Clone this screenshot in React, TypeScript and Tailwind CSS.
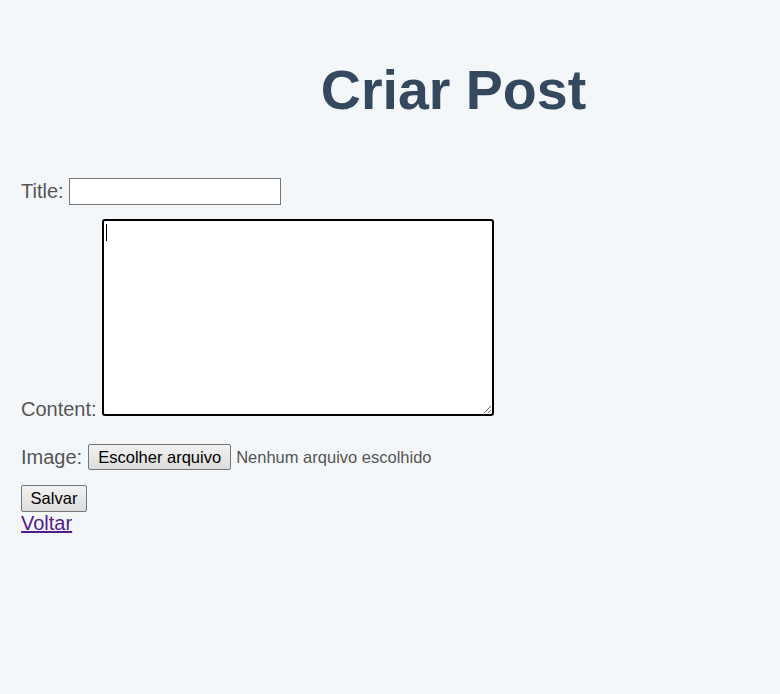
import React from "react";

export default function App() {
  return (
    <div className="min-h-[694px] bg-[#f4f7fa] font-['Liberation_Sans',Arial,sans-serif] text-[20px] leading-[23px] text-[#555]">
      <div className="pl-[127px] pt-[58px] flex justify-center">
        <h1 className="text-[55.5px] leading-[64px] font-bold text-[#34495e]">Criar Post</h1>
      </div>
      <form className="pl-[21px] pt-[56px]" onSubmit={(e) => e.preventDefault()}>
        <div className="flex items-baseline">
          <label className="mr-[5px]">Title:</label>
          <input
            type="text"
            className="w-[212px] h-[27px] bg-white border border-[#767676] px-[2px] text-[20px] outline-none"
          />
        </div>
        <div className="mt-[14px]">
          <label className="mr-[5px]">Content:</label>
          <span className="relative inline-block align-baseline">
            <textarea className="block w-[392px] h-[197px] bg-white border-2 border-black rounded-[3px] outline-none resize" />
            <span className="absolute left-[4px] top-[5px] w-[1px] h-[17px] bg-black" />
          </span>
        </div>
        <div className="mt-[23px] flex items-center h-[26px]">
          <label className="mr-[6px]">Image:</label>
          <button
            type="button"
            className="h-[26px] w-[143px] bg-gradient-to-b from-[#f2f2f2] to-[#dcdcdc] border border-[#767676] rounded-[2px] text-[16.5px] text-black"
          >
            Escolher arquivo
          </button>
          <span className="ml-[5px] text-[16.5px] text-[#555]">Nenhum arquivo escolhido</span>
        </div>
        <div className="mt-[15px]">
          <button
            type="submit"
            className="h-[27px] w-[66px] bg-gradient-to-b from-[#f2f2f2] to-[#dcdcdc] border border-[#767676] rounded-[2px] text-[16.5px] text-black"
          >
            Salvar
          </button>
        </div>
        <div className="mt-0">
          <a href="#" className="text-[#551a8b] underline">Voltar</a>
        </div>
      </form>
    </div>
  );
}
